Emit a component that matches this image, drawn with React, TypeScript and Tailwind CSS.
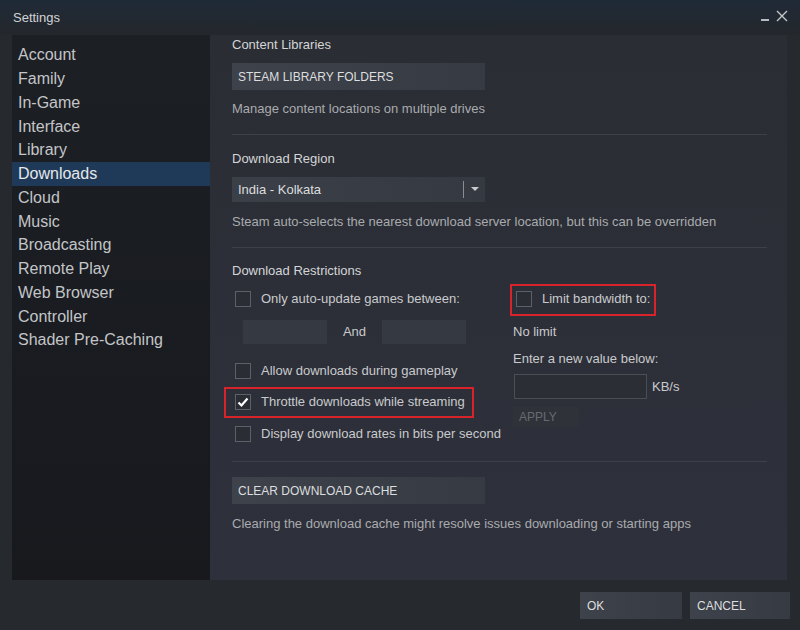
import { useState } from "react";

const sideItems = [
  "Account",
  "Family",
  "In-Game",
  "Interface",
  "Library",
  "Downloads",
  "Cloud",
  "Music",
  "Broadcasting",
  "Remote Play",
  "Web Browser",
  "Controller",
  "Shader Pre-Caching",
];

const font = { fontFamily: '"Liberation Sans", Arial, sans-serif' };

const Check = ({ checked }: { checked?: boolean }) => (
  <span className="w-[16px] h-[16px] border border-[#5c6067] bg-[#2a2d33] flex items-center justify-center shrink-0">
    {checked ? (
      <svg width="12" height="12" viewBox="0 0 12 12">
        <path d="M1.5 6.5 L4.5 9.5 L10.5 2.5" fill="none" stroke="#ffffff" strokeWidth="2.2" />
      </svg>
    ) : null}
  </span>
);

const Row = ({ label, checked, className = "" }: { label: string; checked?: boolean; className?: string }) => (
  <div className={`flex items-center h-[18px] pl-[3px] gap-[10px] ${className}`}>
    <Check checked={checked} />
    <span className="text-[13px] text-[#c9cacc]">{label}</span>
  </div>
);

const Btn = ({ children, className = "" }: { children: React.ReactNode; className?: string }) => (
  <button className={`h-[27px] bg-gradient-to-r from-[#3d424b] to-[#363b43] text-[12px] text-[#dcdedf] text-left pl-[6px] ${className}`}>
    {children}
  </button>
);

export default function App() {
  const [active] = useState("Downloads");

  return (
    <div style={font} className="w-[800px] h-[630px] bg-[#26292d] flex flex-col overflow-hidden">
      <div className="h-[35px] shrink-0 bg-gradient-to-b from-[#1f2a37] to-[#24272c] flex items-center justify-between pl-[13px] pr-[12px]">
        <span className="text-[13px] text-[#d2d3d5]">Settings</span>
        <div className="flex items-center gap-[7px] -mt-[4px]">
          <span className="w-[8px] h-[2px] bg-[#b8bbbf] mt-[8px]" />
          <svg width="12" height="12" viewBox="0 0 12 12">
            <path d="M1 1 L11 11 M11 1 L1 11" stroke="#c4c6c9" strokeWidth="1.4" />
          </svg>
        </div>
      </div>

      <div className="flex h-[545px] pl-[12px]">
        <div className="w-[198px] bg-gradient-to-b from-[#1c1f24] to-[#17191d] pt-[8.5px] flex flex-col">
          {sideItems.map((item) => (
            <div
              key={item}
              className={`h-[23.75px] shrink-0 flex items-center pl-[6px] text-[16px] ${
                item === active ? "bg-[#1f3a58] text-[#e6e8ea]" : "text-[#c3c5c8]"
              }`}
            >
              {item}
            </div>
          ))}
        </div>

        <div className="w-[577px] bg-gradient-to-b from-[#2a2d33] to-[#2e313c] pt-[1px] pl-[22px] pr-[20px] flex flex-col">
          <div className="h-[18px] flex items-center text-[13px] text-[#d4d5d7]">Content Libraries</div>
          <Btn className="mt-[9px] w-[253px]">STEAM LIBRARY FOLDERS</Btn>
          <div className="mt-[10px] h-[18px] flex items-center text-[13px] text-[#a9abae]">
            Manage content locations on multiple drives
          </div>
          <div className="mt-[16px] h-px bg-[#3c4048]" />

          <div className="mt-[15px] h-[18px] flex items-center text-[13px] text-[#d4d5d7]">Download Region</div>
          <div className="mt-[9px] w-[253px] h-[25px] bg-gradient-to-r from-[#3a3f48] to-[#353a42] flex items-center">
            <span className="flex-1 pl-[6px] text-[13px] text-[#dcdedf]">India - Kolkata</span>
            <span className="w-px h-[17px] bg-[#8a8d92]" />
            <span className="w-[21px] flex justify-center">
              <svg width="8" height="5" viewBox="0 0 8 5">
                <path d="M0 0 H8 L4 4 Z" fill="#c8cacd" />
              </svg>
            </span>
          </div>
          <div className="mt-[11px] h-[18px] flex items-center text-[13px] text-[#a9abae]">
            Steam auto-selects the nearest download server location, but this can be overridden
          </div>
          <div className="mt-[16px] h-px bg-[#3c4048]" />

          <div className="mt-[14px] h-[18px] flex items-center text-[13px] text-[#d4d5d7]">Download Restrictions</div>

          <div className="flex">
            <div className="w-[281px] flex flex-col">
              <Row className="mt-[10px]" label="Only auto-update games between:" />
              <div className="mt-[12px] flex items-center pl-[11px]">
                <span className="w-[84px] h-[24px] bg-[#353a42]" />
                <span className="w-[55px] text-center text-[13px] text-[#c9cacc]">And</span>
                <span className="w-[84px] h-[24px] bg-[#353a42]" />
              </div>
              <Row className="mt-[18px]" label="Allow downloads during gameplay" />
              <div className="relative mt-[13px]">
                <Row label="Throttle downloads while streaming" checked />
                <span className="absolute -left-[8px] -top-[6px] w-[250px] h-[31px] border-[2.5px] border-[#d9232a] pointer-events-none" />
              </div>
              <Row className="mt-[14px]" label="Display download rates in bits per second" />
            </div>

            <div className="flex flex-col">
              <div className="relative mt-[10px]">
                <Row label="Limit bandwidth to:" />
                <span className="absolute -left-[3px] -top-[6px] w-[146px] h-[32px] border-[2.5px] border-[#d9232a] pointer-events-none" />
              </div>
              <div className="mt-[15px] h-[18px] flex items-center text-[13px] text-[#c9cacc]">No limit</div>
              <div className="mt-[9px] h-[18px] flex items-center text-[13px] text-[#c9cacc]">Enter a new value below:</div>
              <div className="mt-[6px] flex items-center">
                <span className="ml-px w-[133px] h-[25px] border border-[#4a4e55] bg-[#2b2e35]" />
                <span className="ml-[5px] text-[13px] text-[#c9cacc]">KB/s</span>
              </div>
              <div className="mt-[8px] w-[66px] h-[20px] bg-[#2f3239] flex items-center pl-[6px] text-[12px] text-[#676b72]">
                APPLY
              </div>
            </div>
          </div>

          <div className="mt-[18px] h-px bg-[#3c4048]" />
          <Btn className="mt-[15px] w-[253px]">CLEAR DOWNLOAD CACHE</Btn>
          <div className="mt-[11px] h-[18px] flex items-center text-[13px] text-[#a9abae]">
            Clearing the download cache might resolve issues downloading or starting apps
          </div>
        </div>
      </div>

      <div className="flex-1 flex justify-end items-start pt-[12px] pr-[10px] gap-[8px]">
        <Btn className="w-[102px] pl-[7px]">OK</Btn>
        <Btn className="w-[100px] pl-[7px]">CANCEL</Btn>
      </div>
    </div>
  );
}
